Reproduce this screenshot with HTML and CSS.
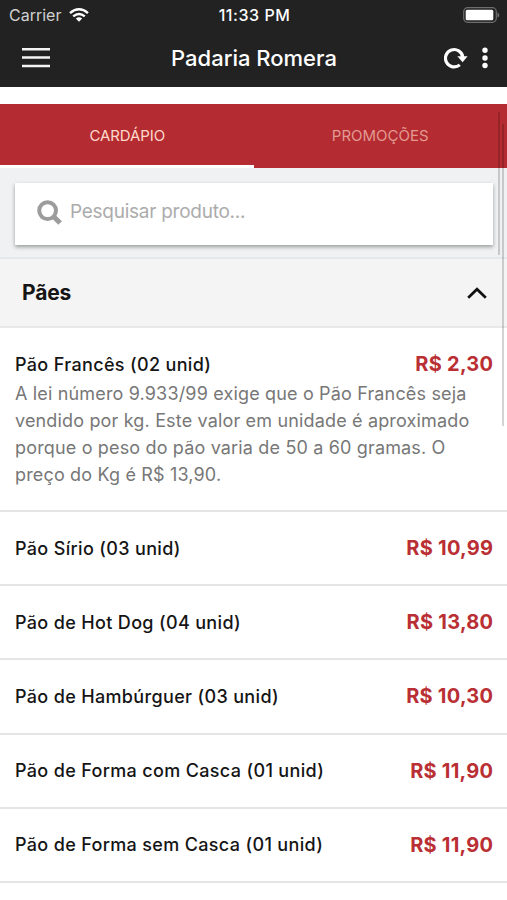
FILE: index.html
```html
<!DOCTYPE html>
<html lang="pt-BR">
<head>
<meta charset="utf-8">
<title>Padaria Romera</title>
<link rel="stylesheet" href="styles.css">
</head>
<body>
<header class="top">
  <div class="status">
    <div class="carrier"><span>Carrier</span>
      <svg width="20" height="14" viewBox="0 0 20 14" fill="none" stroke="#fff" stroke-width="2.4"><path d="M1 5.1Q10-2.5 19 5.1M4.2 8.3Q10 3.5 15.8 8.3"/><path d="M6.8 10.5Q10 7.9 13.2 10.5L10 13.8Z" fill="#fff" stroke="none"/></svg>
    </div>
    <span class="clock">11:33 PM</span>
    <svg class="battery" width="37" height="16" viewBox="0 0 37 16"><rect x=".7" y=".7" width="32.6" height="14.6" rx="4" fill="none" stroke="#6d6d6d" stroke-width="1.2"/><rect x="2.7" y="2.7" width="27.6" height="10.6" rx="1.5" fill="#fff"/><path d="M34.5 5.2Q38 8 34.5 10.8Z" fill="#777"/></svg>
  </div>
  <div class="nav">
    <svg width="28" height="20" viewBox="0 0 28 20" fill="#f4f4f4"><path d="M0 0h28v2.5H0zM0 8.3h28v2.5H0zM0 16.8h28v2.5H0z"/></svg>
    <h1 class="title">Padaria Romera</h1>
    <div class="actions">
      <svg width="24" height="22" viewBox="0 0 24 22"><path d="M15.8 17.9A8.7 8.7 0 1 1 18.8 10" fill="none" stroke="#fff" stroke-width="3.2"/><path d="M13.4 9.2h10.2l-5 6z" fill="#fff"/></svg>
      <svg width="6" height="22" viewBox="0 0 6 22" fill="#fff"><circle cx="3" cy="3.3" r="2.7"/><circle cx="3" cy="11" r="2.7"/><circle cx="3" cy="18.5" r="2.7"/></svg>
    </div>
  </div>
</header>
<nav class="tabs">
  <div class="tab tab-active"><span class="tab-label">CARDÁPIO</span></div>
  <div class="tab"><span class="tab-label">PROMOÇÕES</span></div>
</nav>
<div class="search">
  <div class="field">
    <svg width="26" height="26" viewBox="0 0 26 26" fill="none" stroke="#9c9c9c"><circle cx="10.6" cy="10.6" r="8.4" stroke-width="4"/><path d="M16.5 16.5l6.6 6.6" stroke-width="5"/></svg>
    <span class="placeholder">Pesquisar produto...</span>
  </div>
</div>
<section class="category">
  <h2 class="category-name">Pães</h2>
  <svg width="20" height="12" viewBox="0 0 20 12" fill="none" stroke="#111" stroke-width="2.7"><path d="M1.2 10.7L10 2.2l8.8 8.5"/></svg>
</section>
<main class="items">
  <article class="item item-first">
    <div class="line"><h3 class="name">Pão Francês (02 unid)</h3><span class="price">R$ 2,30</span></div>
    <p class="desc">A lei número 9.933/99 exige que o Pão Francês seja<br>vendido por kg. Este valor em unidade é aproximado<br>porque o peso do pão varia de 50 a 60 gramas. O<br>preço do Kg é R$ 13,90.</p>
  </article>
  <article class="item"><div class="line"><h3 class="name">Pão Sírio (03 unid)</h3><span class="price">R$ 10,99</span></div></article>
  <article class="item"><div class="line"><h3 class="name">Pão de Hot Dog (04 unid)</h3><span class="price">R$ 13,80</span></div></article>
  <article class="item"><div class="line"><h3 class="name">Pão de Hambúrguer (03 unid)</h3><span class="price">R$ 10,30</span></div></article>
  <article class="item"><div class="line"><h3 class="name">Pão de Forma com Casca (01 unid)</h3><span class="price">R$ 11,90</span></div></article>
  <article class="item"><div class="line"><h3 class="name">Pão de Forma sem Casca (01 unid)</h3><span class="price">R$ 11,90</span></div></article>
</main>
<div class="scroll scroll-inner"></div>
<div class="scroll scroll-outer"></div>
</body>
</html>
```
FILE: styles.css
```css
* { box-sizing: border-box; }
body { margin: 0; height: 900px; overflow: hidden; position: relative; background: #fff; color: #151515; font-family: Inter, "Liberation Sans", sans-serif; }
h1, h2, h3, p { margin: 0; }
svg { display: block; flex: none; }
.top { height: 87px; background: #222; color: #fff; }
.status { height: 30px; padding: 0 7px 0 9px; display: grid; grid-template-columns: 1fr auto 1fr; align-items: center; }
.carrier { display: flex; align-items: center; gap: 8px; font-size: 16px; color: #d0d0d0; }
.clock { font-size: 16px; font-weight: 500; letter-spacing: .55px; }
.battery { justify-self: end; }
.nav { height: 56px; padding: 0 19px 0 22px; display: grid; grid-template-columns: 1fr auto 1fr; align-items: center; }
.title { font-size: 22px; font-weight: 500; line-height: 26px; margin: 0 2px 1px 0; }
.actions { display: flex; justify-content: flex-end; gap: 14px; }
.tabs { margin-top: 17px; height: 64px; display: flex; background: #b42b31; }
.tab { flex: 1; padding-top: 22px; display: flex; justify-content: center; color: #e39a92; }
.tab-active { color: #ffd9cb; border-bottom: 3px solid #fff; }
.tab-label { font-size: 15px; line-height: 20px; }
.tab-active .tab-label { margin-left: 1px; letter-spacing: -.1px; }
.search { height: 91px; padding: 15px 14px 12px 15px; background: #eff1f2; border-bottom: 2px solid #e5e8e9; }
.field { height: 62px; padding: 0 22px 3px; display: flex; align-items: center; gap: 7px; background: #fff; box-shadow: 0 2px 4px rgba(0, 0, 0, .36); }
.placeholder { font-size: 19px; line-height: 24px; margin-bottom: 2px; letter-spacing: -.26px; color: #acacac; }
.category { height: 69px; padding: 0 20px 0 22px; display: flex; align-items: center; justify-content: space-between; background: #f4f4f4; border-bottom: 2px solid #e7e9e9; }
.category-name { font-size: 21px; font-weight: 700; letter-spacing: -.2px; }
.item { height: 74.2px; padding: 22px 14px 0 15px; border-bottom: 2px solid #e5e5e5; }
.item-first { height: 184px; }
.line { height: 28px; display: flex; align-items: center; justify-content: space-between; }
.name { font-size: 18px; font-weight: 500; letter-spacing: .34px; }
.price { font-size: 20px; font-weight: 700; letter-spacing: .25px; margin-right: -.25px; color: #b92f34; }
.desc { margin-top: 2px; font-size: 18px; line-height: 27px; letter-spacing: .16px; color: #777; white-space: nowrap; }
.scroll { position: absolute; width: 2px; background: rgba(0, 0, 0, .17); }
.scroll-inner { left: 498px; top: 112px; height: 143px; }
.scroll-outer { left: 502px; top: 124px; height: 302px; }
```
